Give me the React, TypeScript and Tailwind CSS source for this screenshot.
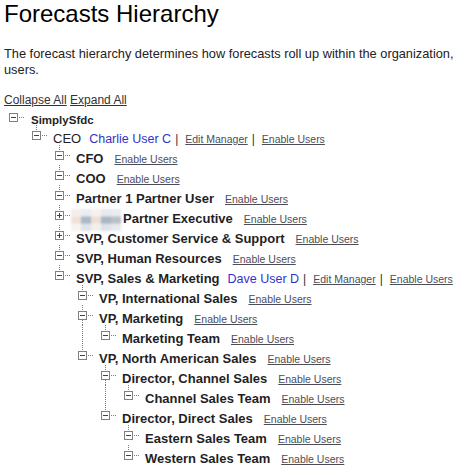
import React from "react";

type Node = {
  label: string;
  bold?: boolean;
  size?: string;
  user?: string;
  closed?: boolean;
  photo?: boolean;
  noEnable?: boolean;
  kids?: Node[];
};

const tree: Node = {
  label: "SimplySfdc",
  bold: true,
  size: "text-[11.5px]",
  noEnable: true,
  kids: [
    {
      label: "CEO",
      user: "Charlie User C",
      kids: [
        { label: "CFO", bold: true },
        { label: "COO", bold: true },
        { label: "Partner 1 Partner User", bold: true },
        { label: "Partner Executive", bold: true, closed: true, photo: true },
        { label: "SVP, Customer Service & Support", bold: true, closed: true },
        { label: "SVP, Human Resources", bold: true },
        {
          label: "SVP, Sales & Marketing",
          bold: true,
          user: "Dave User D",
          kids: [
            { label: "VP, International Sales", bold: true },
            { label: "VP, Marketing", bold: true, kids: [{ label: "Marketing Team", bold: true }] },
            {
              label: "VP, North American Sales",
              bold: true,
              kids: [
                {
                  label: "Director, Channel Sales",
                  bold: true,
                  kids: [{ label: "Channel Sales Team", bold: true }],
                },
                {
                  label: "Director, Direct Sales",
                  bold: true,
                  kids: [
                    { label: "Eastern Sales Team", bold: true },
                    { label: "Western Sales Team", bold: true },
                  ],
                },
              ],
            },
          ],
        },
      ],
    },
  ],
};

type Row = { node: Node; guides: boolean[]; root: boolean; last: boolean };

function flatten(node: Node, guides: boolean[], root: boolean, last: boolean, out: Row[]) {
  out.push({ node, guides, root, last });
  if (node.closed || !node.kids) return out;
  node.kids.forEach((k, i) => {
    flatten(k, [...guides, !root && !last], false, i === node.kids!.length - 1, out);
  });
  return out;
}

const DOT = "#7a7a7a";

function Guide({ on }: { on: boolean }) {
  return (
    <svg width="23" height="20" className="shrink-0" shapeRendering="crispEdges">
      {on && <line x1="9.5" y1="0" x2="9.5" y2="20" stroke={DOT} strokeDasharray="1 1" />}
    </svg>
  );
}

function Toggle({ open, top, bottom, h }: { open: boolean; top: boolean; bottom: boolean; h: number }) {
  return (
    <svg width="23" height={h} className="shrink-0" shapeRendering="crispEdges">
      {top && <line x1="9.5" y1="0" x2="9.5" y2="6" stroke={DOT} strokeDasharray="1 1" />}
      {bottom && <line x1="9.5" y1="15" x2="9.5" y2={h} stroke={DOT} strokeDasharray="1 1" />}
      <rect x="5.5" y="6.5" width="8" height="8" fill="#fff" stroke="#808080" />
      <rect x="7" y="10" width="5" height="1" fill="#a31621" />
      {!open && <rect x="9" y="8" width="1" height="5" fill="#a31621" />}
      <line x1="15" y1="10.5" x2="21" y2="10.5" stroke={DOT} strokeDasharray="1 1" />
    </svg>
  );
}

function Photo() {
  const cols = [
    ["#f4eeeb", "#f0e2db", "#f7f3f1"],
    ["#e9eef3", "#aab7c4", "#dfe4e9"],
    ["#f6f1ee", "#eedfd8", "#f4efec"],
    ["#e6ebf0", "#a9b6c3", "#dde2e8"],
    ["#eaecef", "#b9c0c8", "#e8eaec"],
  ];
  return (
    <svg width="50" height="22" className="shrink-0 self-start mt-[4px] ml-[-2px] blur-[0.8px]">
      {cols.map((c, i) =>
        c.map((col, j) => <rect key={i + "-" + j} x={i * 10} y={j * 7.4} width="10" height="7.4" fill={col} />)
      )}
    </svg>
  );
}

function Link({ children }: { children: React.ReactNode }) {
  return <a className="underline text-[10.5px] text-[#4d4d57] cursor-pointer">{children}</a>;
}

function TreeRow({ row }: { row: Row }) {
  const { node, guides, root, last } = row;
  const h = root ? 18 : 20;
  const hasKids = !!node.kids && !node.closed;
  return (
    <div className="flex" style={{ height: h }}>
      {guides.map((g, i) => (
        <Guide key={i} on={g} />
      ))}
      <Toggle open={!node.closed} top={!root} bottom={!root && !last && hasKids} h={h} />
      {node.photo && <Photo />}
      <div
        className={
          "flex items-baseline whitespace-nowrap pt-[5px] leading-[16px] " +
          (node.photo ? "ml-[2px]" : root ? "ml-[4px]" : "ml-[3px]")
        }
      >
        <span className={(node.size ?? "text-[13px]") + (node.bold ? " font-bold" : "") + " text-[#1f1f26]"}>
          {node.label}
        </span>
        {node.user && (
          <>
            <span className="ml-[8px] text-[12.5px] text-[#3333cc]">{node.user}</span>
            <span className="ml-[4px] text-[12px] text-[#333]">|</span>
            <span className="ml-[7px]">
              <Link>Edit Manager</Link>
            </span>
            <span className="ml-[4px] text-[12px] text-[#333]">|</span>
            <span className="ml-[7px]">
              <Link>Enable Users</Link>
            </span>
          </>
        )}
        {!node.user && !node.noEnable && (
          <span className="ml-[11px]">
            <Link>Enable Users</Link>
          </span>
        )}
      </div>
    </div>
  );
}

export default function App() {
  const rows = flatten(tree, [], true, true, []);
  return (
    <div className="w-[464px] h-[473px] overflow-hidden bg-white px-[4px] font-['Liberation_Sans',Arial,sans-serif] text-[#222]">
      <h1 className="text-[24px] leading-[28px] text-black">Forecasts Hierarchy</h1>
      <p className="mt-[18px] text-[12.8px] leading-[16px] whitespace-nowrap">
        The forecast hierarchy determines how forecasts roll up within the organization,
        <br />
        users.
      </p>
      <div className="mt-[16px] h-[13px] text-[12px] leading-[13px] text-[#333]">
        <a className="underline cursor-pointer">Collapse All</a> <a className="underline cursor-pointer">Expand All</a>
      </div>
      <div>
        {rows.map((r, i) => (
          <TreeRow key={i} row={r} />
        ))}
      </div>
    </div>
  );
}
